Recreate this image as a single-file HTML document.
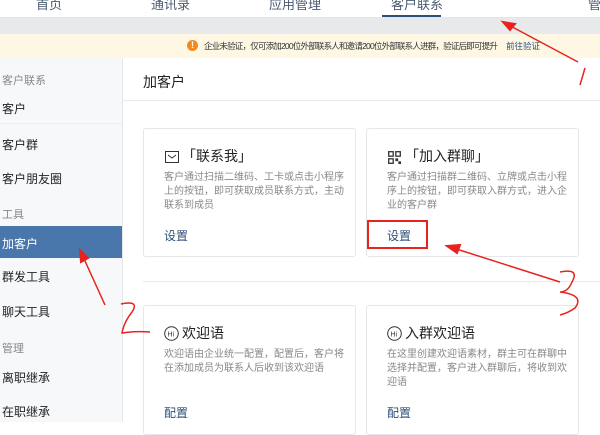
<!DOCTYPE html>
<html><head><meta charset="utf-8"><style>
*{margin:0;padding:0;box-sizing:border-box}
body{width:600px;height:422px;overflow:hidden;background:#fff;font-family:"Liberation Sans","Noto Sans CJK SC",sans-serif;position:relative;color:#222}
.a{position:absolute;white-space:nowrap}
.nav{top:0;left:0;width:600px;height:18px;background:#fff;border-bottom:1px solid #e3e4e6}
.nav span{position:absolute;top:-6px;font-size:13px;color:#4a5a70}
.gray{top:18px;left:0;width:600px;height:16px;background:#e8e9eb}
.ban{top:34px;left:0;width:600px;height:24px;background:#fdf7e3;font-size:8.5px;color:#333}
.side{top:58px;left:0;width:123px;height:364px;background:#f7f8fa;border-right:1px solid #e5e6e8}
.si{left:2px;font-size:12px;color:#222}
.sl{left:2px;font-size:11px;color:#888}
.card{position:absolute;border:1px solid #e6e7ea;border-radius:3px;background:#fff}
.ct{position:absolute;left:20px;top:20px;font-size:14px;color:#222}
.cd{position:absolute;left:20px;top:42px;font-size:10px;line-height:14px;color:#888;width:180px;white-space:normal}
.cl{position:absolute;left:20px;font-size:12px;color:#2b4f78}
</style></head><body>
<div class="a nav"><span style="left:36px">首页</span><span style="left:151px">通讯录</span><span style="left:269px">应用管理</span><span style="left:391px">客户联系</span><span style="left:588px">管</span>
<div style="position:absolute;left:382px;top:15px;width:59px;height:2px;background:#2b4f78"></div></div>
<div class="a gray"></div>
<div class="a ban"><span style="position:absolute;left:187px;top:6px;width:11px;height:11px;border-radius:50%;background:#f08a24;color:#fff;font-size:9px;text-align:center;line-height:11px;font-weight:bold">!</span><span style="position:absolute;left:204px;top:6px;letter-spacing:-0.8px">企业未验证，仅可添加200位外部联系人和邀请200位外部联系人进群，验证后即可提升</span><span style="position:absolute;left:506px;top:6px;color:#2b4f78">前往验证</span></div>
<div class="a side"></div>
<div class="a sl" style="top:72px">客户联系</div>
<div class="a si" style="top:100px">客户</div>
<div class="a" style="left:0;top:123px;width:122px;height:1px;background:#eceef0"></div>
<div class="a si" style="top:136px">客户群</div>
<div class="a si" style="top:170px">客户朋友圈</div>
<div class="a sl" style="top:206px">工具</div>
<div class="a" style="left:0;top:226px;width:122px;height:32px;background:#4a77ab"></div>
<div class="a si" style="top:235px;color:#fff">加客户</div>
<div class="a si" style="top:268px">群发工具</div>
<div class="a si" style="top:303px">聊天工具</div>
<div class="a sl" style="top:340px">管理</div>
<div class="a si" style="top:369px">离职继承</div>
<div class="a si" style="top:403px">在职继承</div>
<div class="a" style="left:143px;top:72px;font-size:14px">加客户</div>
<div class="a" style="left:123px;top:100px;width:477px;height:1px;background:#e8e9eb"></div>
<div class="card" style="left:143px;top:128px;width:213px;height:129px">
<svg style="position:absolute;left:21px;top:22px" width="14" height="12"><rect x="0.5" y="0.5" width="13" height="11" fill="none" stroke="#333"/><path d="M3 4 L7 7 L11 4" fill="none" stroke="#333"/></svg>
<div class="ct" style="left:38px;top:17px">「联系我」</div>
<div class="cd">客户通过扫描二维码、工卡或点击小程序上的按钮，即可获取成员联系方式，主动联系到成员</div>
<div class="cl" style="top:98px">设置</div></div>
<div class="card" style="left:366px;top:128px;width:213px;height:129px">
<svg style="position:absolute;left:21px;top:22px" width="13" height="13" fill="none" stroke="#333" stroke-width="1.3"><rect x="0.7" y="0.7" width="4.5" height="4.5"/><rect x="7.8" y="0.7" width="4.5" height="4.5"/><rect x="0.7" y="7.8" width="4.5" height="4.5"/><rect x="8" y="8" width="1.5" height="1.5" fill="#333"/><rect x="11" y="11" width="1.5" height="1.5" fill="#333"/></svg>
<div class="ct" style="left:38px;top:17px">「加入群聊」</div>
<div class="cd">客户通过扫描群二维码、立牌或点击小程序上的按钮，即可获取入群方式，进入企业的客户群</div>
<div class="cl" style="top:98px">设置</div></div>
<div class="a" style="left:143px;top:281px;width:457px;height:1px;background:#e8e9eb"></div>
<div class="card" style="left:143px;top:305px;width:213px;height:130px">
<svg style="position:absolute;left:20px;top:20px" width="15" height="15"><circle cx="7.5" cy="7.5" r="6.8" fill="none" stroke="#333"/><text x="3.5" y="10.5" font-size="7" fill="#333" font-family="Liberation Sans">Hi</text></svg>
<div class="ct" style="left:38px;top:17px">欢迎语</div>
<div class="cd">欢迎语由企业统一配置，配置后，客户将在添加成员为联系人后收到该欢迎语</div>
<div class="cl" style="top:98px">配置</div></div>
<div class="card" style="left:366px;top:305px;width:213px;height:130px">
<svg style="position:absolute;left:20px;top:20px" width="16" height="16"><circle cx="7.5" cy="7.5" r="6.8" fill="none" stroke="#333"/><text x="3.5" y="10.5" font-size="7" fill="#333" font-family="Liberation Sans">Hi</text></svg>
<div class="ct" style="left:38px;top:17px">入群欢迎语</div>
<div class="cd">在这里创建欢迎语素材，群主可在群聊中选择并配置，客户进入群聊后，将收到欢迎语</div>
<div class="cl" style="top:98px">配置</div></div>
<svg class="a" style="left:0;top:0" width="600" height="422" fill="none" stroke="#e8231f" stroke-width="2">
<path d="M578 62 L503 22" stroke-width="1.5"/><path d="M503 22 L515 24 L510 30 Z" fill="#e8231f"/>
<path d="M585 68 L580 85" stroke-width="1.5"/>
<rect x="368" y="221" width="59" height="27"/>
<path d="M560 282 L447 246" stroke-width="1.5"/><path d="M447 246 L460 245 L457 253 Z" fill="#e8231f"/>
<path d="M560 272 Q580 268 572 282 Q568 292 560 292 Q585 295 575 308 Q568 313 560 315" stroke-width="1.5"/>
<path d="M105 305 L80 250" stroke-width="1.5"/><path d="M80 250 L81 262 L88 258 Z" fill="#e8231f"/>
<path d="M121 304 Q140 300 132 312 Q124 322 122 333 Q135 331 150 332" stroke-width="1.5"/>
</svg>
</body></html>
